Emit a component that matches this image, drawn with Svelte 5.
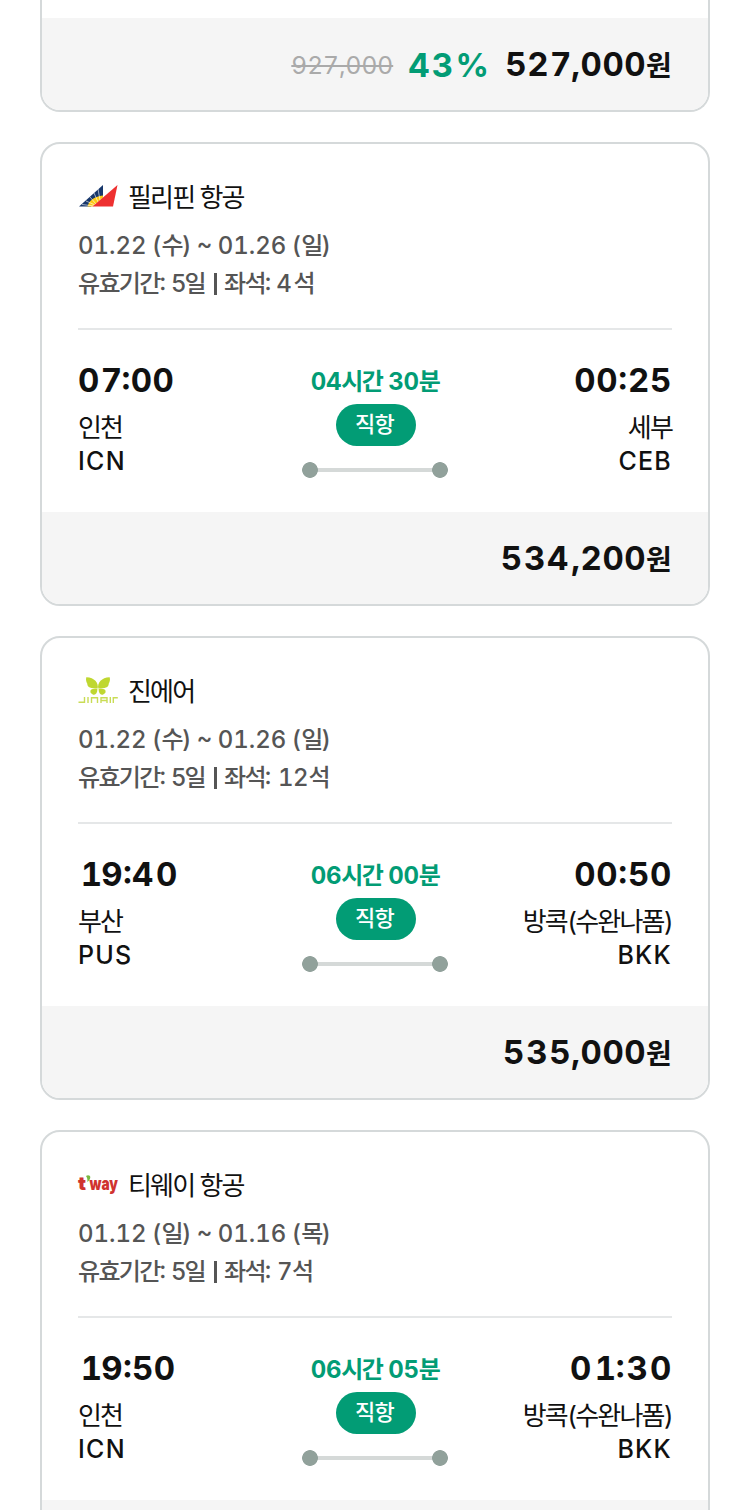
<script>
  const flights = [
    {
      airline: '필리핀 항공', logo: 'philippine',
      period: '01.22 (수) ~ 01.26 (일)', valid: '5', seats: '4',
      duration: '04시간 30분',
      from: { time: '07:00', city: '인천', code: 'ICN' },
      to: { time: '00:25', city: '세부', code: 'CEB' },
      price: '534,200'
    },
    {
      airline: '진에어', logo: 'jinair',
      period: '01.22 (수) ~ 01.26 (일)', valid: '5', seats: '12',
      duration: '06시간 00분',
      from: { time: '19:40', city: '부산', code: 'PUS' },
      to: { time: '00:50', city: '방콕(수완나폼)', code: 'BKK' },
      price: '535,000'
    },
    {
      airline: '티웨이 항공', logo: 'tway',
      period: '01.12 (일) ~ 01.16 (목)', valid: '5', seats: '7',
      duration: '06시간 05분',
      from: { time: '19:50', city: '인천', code: 'ICN' },
      to: { time: '01:30', city: '방콕(수완나폼)', code: 'BKK' },
      price: ''
    }
  ]

  // hangul is set tighter than digits, so split a label into runs
  const runs = (text) => text.match(/[가-힣]+|[~:]|[^가-힣~:]+/g) || []
</script>

{#snippet mixed(text)}{#each runs(text) as run}<span class:ko={/[가-힣]/.test(run)} class:mid={/[~:]/.test(run)}>{run}</span>{/each}{/snippet}

{#snippet digits(text)}{#each text as ch}<span class:one={ch === '1'} class:three={ch === '3'} class:four={ch === '4'} class:seven={ch === '7'}>{ch}</span>{/each}{/snippet}

<main>
  <article class="card cut">
    <div class="body"></div>
    <div class="price">
      <del>927,000</del>
      <span class="rate">43%</span>
      <strong>{@render digits('527,000')}<span class="won">원</span></strong>
    </div>
  </article>

  {#each flights as f}
    <article class="card">
      <div class="body">
        <div class="airline">
          <svg class="logo" viewBox="0 0 40 40">
            {#if f.logo === 'philippine'}
              <path d="M1 29.500 25 8v11L13 29.500z" fill="#17376b" />
              <path d="M9.500 29.500c1-5 6-10 15.500-11v2L15 29.500z" fill="#fdc916" />
              <path d="m16 29-12-1.500M17 28 8 24M18 27l-6-7M20 25l-4-9M22 23l-2-11" stroke="#fff" stroke-width=".6" />
              <path d="M39.500 8 14.500 29.500H35z" fill="#ee3030" />
            {:else if f.logo === 'jinair'}
              <g fill="#bfd730">
                <path d="M19.700 17.500C21 12 16 6 8.300 6.200c-.8 3 .2 5 1 6.600-.2 3.800 4 4.700 10.400 4.700z" />
                <path d="M20.300 17.500C19 12 24 6 31.700 6.200c.8 3-.2 5-1 6.600.2 3.800-4 4.700-10.400 4.700z" />
                <path d="M19.400 18c-4-.8-7.500 0-7 3 .3 1.500 1.500 1.500 2 2.200 2.500 1.500 5-.2 5-5.200z" />
                <path d="M20.600 18c4-.8 7.500 0 7 3-.3 1.500-1.500 1.500-2 2.200-2.500 1.500-5-.2-5-5.200z" />
              </g>
              <path d="M.5 31.300h6V26M10 26v6M13.500 32v-5.300h6V32M23 32v-5.300h6V32M23 29.500h6M32.300 26v6M35.300 32v-5.300h4.500" fill="none" stroke="#c9dc55" stroke-width="1.400" />
            {:else}
              <text x="0" y="25" textLength="8" lengthAdjust="spacingAndGlyphs">t</text>
              <path d="M8 11c2-1.500 4.500-.5 4.300 1.500-.2 2-1.800 4-3 4.500.3-2 .2-4-1.300-6z" fill="#79b843" />
              <text x="11.500" y="25" textLength="28.500" lengthAdjust="spacingAndGlyphs">way</text>
            {/if}
          </svg>
          <span class="ko">{f.airline}</span>
        </div>
        <div class="info">{@render mixed(f.period)}</div>
        <div class="info valid">{@render mixed('유효기간: ')}<b>{f.valid}</b>{@render mixed('일')}<i></i>{@render mixed('좌석: ')}{@render digits(f.seats)}{@render mixed('석')}</div>

        <div class="route">
          <div class="stop">
            <div class="time">{@render digits(f.from.time)}</div>
            <div class="city">{f.from.city}</div>
            <div class="code">{f.from.code}</div>
          </div>
          <div class="flight">
            <div class="duration">{@render mixed(f.duration)}</div>
            <div class="direct">직항</div>
            <div class="line"></div>
          </div>
          <div class="stop arrival">
            <div class="time">{@render digits(f.to.time)}</div>
            <div class="city">{f.to.city}</div>
            <div class="code">{f.to.code}</div>
          </div>
        </div>
      </div>
      <div class="price">
        {#if f.price}<strong>{@render digits(f.price)}<span class="won">원</span></strong>{/if}
      </div>
    </article>
  {/each}
</main>

<style>
  :global(body) {
    background: #fff;
  }

  main {
    box-sizing: border-box;
    height: 1510px;
    overflow: hidden;
    padding: 0 40px;
    display: flex;
    flex-direction: column;
    gap: 30px;
    color: #111;
    font-family: Inter, "Noto Sans CJK KR", sans-serif;
    font-variant-numeric: tabular-nums;
    white-space: nowrap;
  }

  .card {
    flex: none;
    border: 2px solid #d5d9da;
    border-radius: 20px;
    overflow: hidden;
  }

  .body {
    box-sizing: border-box;
    height: 368px;
    padding: 35px 36px 0;
  }

  .card.cut {
    border-top: 0;
    border-radius: 0 0 20px 20px;
  }

  .cut .body {
    height: 18px;
    padding: 0;
  }

  .ko {
    letter-spacing: -0.07em;
  }

  .mid {
    font-feature-settings: "case";
  }

  /* uneven side bearings of the numerals */
  .one {
    margin: 0 -0.03em 0 0.08em;
  }

  .three {
    margin: 0 0.04em 0 0.04em;
  }

  .four {
    margin-right: 0.07em;
  }

  .seven {
    margin: 0 -0.02em 0 0.03em;
  }

  .airline {
    display: flex;
    align-items: center;
    gap: 10px;
    height: 38px;
    margin-bottom: 10px;
    font-size: 26px;
    line-height: 38px;
  }

  .logo {
    width: 40px;
    height: 40px;
    margin-bottom: 2px;
    overflow: visible;
  }

  .logo text {
    fill: #d0332f;
    font: 900 18.5px Inter, sans-serif;
  }

  .info {
    height: 38px;
    color: #555;
    font-size: 24px;
    font-weight: 550;
    line-height: 38px;
    white-space: pre;
    word-spacing: -1px;
  }

  .info .ko {
    font-weight: 500;
  }

  .valid {
    word-spacing: -1.5px;
  }

  .info b {
    font-weight: 550;
    letter-spacing: -2px;
  }

  .info i {
    display: inline-block;
    width: 3px;
    height: 22px;
    margin: 0 7px 0 9px;
    background: #555;
    vertical-align: -3px;
  }

  .route {
    display: grid;
    grid-template-columns: 1fr 146px 1fr;
    margin-top: 25px;
    padding-top: 28px;
    border-top: 2px solid #e5e7e8;
  }

  .arrival {
    text-align: right;
  }

  .time {
    margin-bottom: 9px;
    font-size: 33px;
    font-weight: 700;
    line-height: 44px;
    letter-spacing: 0.3px;
    font-feature-settings: "case";
  }

  .arrival .time {
    letter-spacing: 0.7px;
  }

  .city {
    font-size: 26px;
    line-height: 34px;
    letter-spacing: -0.07em;
  }

  .code {
    font-size: 25px;
    font-weight: 550;
    line-height: 32px;
    letter-spacing: 0.05em;
  }

  .flight {
    display: flex;
    flex-direction: column;
    align-items: center;
    padding-top: 5px;
  }

  .duration {
    color: #029c75;
    font-size: 24px;
    font-weight: 700;
    line-height: 38px;
    letter-spacing: -0.01em;
    white-space: pre;
  }

  .direct {
    width: 80px;
    height: 42px;
    margin: 3px 0 16px 2px;
    border-radius: 21px;
    background: #029c75;
    color: #fff;
    font-size: 22px;
    font-weight: 500;
    line-height: 40px;
    text-align: center;
    text-indent: -3px;
    letter-spacing: -0.03em;
  }

  .line {
    width: 146px;
    height: 16px;
    background:
      radial-gradient(circle at 8px 8px, #91a19b 7.500px, transparent 8.200px),
      radial-gradient(circle at 138px 8px, #91a19b 7.500px, transparent 8.200px),
      linear-gradient(#d5d9d8, #d5d9d8) center / 130px 4px no-repeat;
  }

  .price {
    display: flex;
    justify-content: flex-end;
    align-items: center;
    box-sizing: border-box;
    height: 92px;
    padding: 2px 37px 0 36px;
    background: #f5f5f5;
    font-size: 33px;
    line-height: 90px;
  }

  .price strong {
    font-weight: 700;
    letter-spacing: 0.5px;
  }

  .price .won {
    font-size: 28px;
    letter-spacing: -0.03em;
  }

  .rate {
    margin: 0 14px 0 15px;
    color: #029c75;
    font-weight: 700;
    letter-spacing: 2.3px;
  }

  del {
    color: #aaa;
    font-size: 24.5px;
  }
</style>
